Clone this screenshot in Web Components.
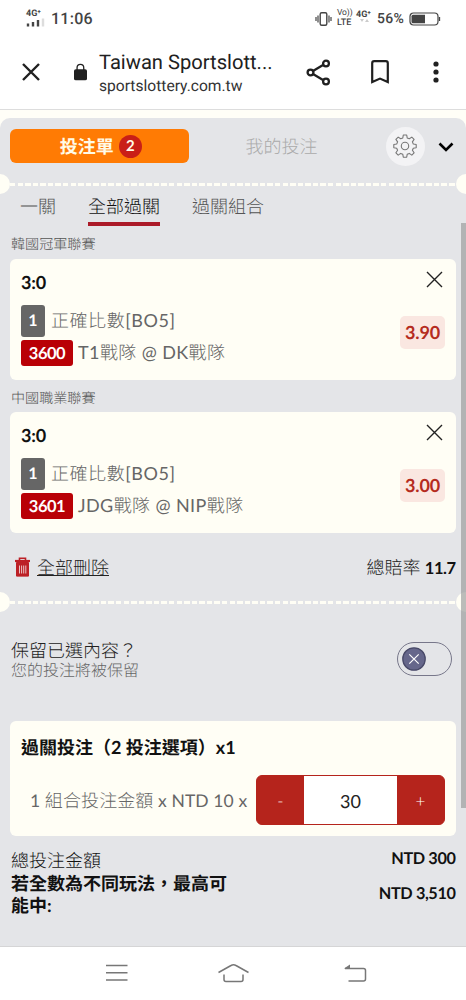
<!DOCTYPE html>
<html lang="zh-Hant">
<head>
<meta charset="utf-8">
<title>Taiwan Sportslottery</title>
<style>
html,body{margin:0;height:1000px;overflow:hidden;background:#fff}
body{font-family:Lato,"Noto Sans CJK TC",sans-serif;text-rendering:geometricPrecision}
</style>
</head>
<body>
<bet-app></bet-app>
<script>
const define = (name, html) => customElements.define(name, class extends HTMLElement {
  constructor() {
    super();
    const t = document.createElement('template');
    t.innerHTML = html;
    this.attachShadow({mode: 'open'}).append(t.content.cloneNode(true));
  }
});

define('status-bar', `
<style>
:host{display:flex;height:38px;box-sizing:border-box;padding:0 25px 0 26px;align-items:center;justify-content:space-between;font-family:Roboto,sans-serif;color:#444;background:#fff}
.g{display:flex;align-items:center}
.sig{display:flex;flex-direction:column;width:19px;margin-right:6px;height:17px;margin-top:-2px}
.sig b{font-size:9px;line-height:8px;font-weight:700}
.time{font:500 16px/20px Roboto;letter-spacing:.25px}
svg{display:block}
.lte{font:400 8.5px/9px Roboto;width:16px;margin:-1px 3px 0 5px}
.lte span{display:block;white-space:nowrap;height:9px;letter-spacing:-.1px}
.lte span+span{font-size:9px;font-weight:500;line-height:10px;height:10px;letter-spacing:0}
.net{font:700 9px/8px Roboto;width:16px;height:17px;margin-right:5px;white-space:nowrap}
.pct{font:500 14px/18px Roboto;letter-spacing:.3px;width:27px;margin-right:5px;white-space:nowrap}
</style>
<div class="g"><div class="sig"><b>4G⁺</b><svg width="19" height="9"><path d="M2 8.5V5.500M7 8.5V4M12 8.5V2" stroke="#444" stroke-width="2.4"/><path d="M17 8.5V.5" stroke="#ddd" stroke-width="2.4"/></svg></div><span class="time">11:06</span></div>
<div class="g">
<svg width="17" height="16" viewBox="0 0 17 16" fill="none" stroke="#444"><rect x="5.2" y="1.7" width="6.6" height="12.6" rx="1.5" stroke-width="1.4"/><path d="M3 4.5v7M1 6v4M14 4.5v7M16 6v4" stroke-width="1.2"/></svg>
<div class="lte"><span>Vo))</span><span>LTE</span></div>
<div class="net">4G⁺<svg width="12" height="5" style="margin-left:4px"><path d="M0 0h4l-2 3zM5 3h4L7 0z" fill="#ccc"/></svg></div>
<span class="pct">56%</span>
<svg width="32" height="14" viewBox="0 0 32 14"><rect x="1" y="1" width="28" height="12" rx="3.5" fill="none" stroke="#444" stroke-width="1.2"/><path d="M4 2.8h12v8.4H4a1.5 1.5 0 0 1-1.5-1.5V4.300A1.500 1.500 0 0 1 4 2.800z" fill="#444"/><path d="M30.500 5v4" stroke="#444" stroke-width="1.300"/></svg>
</div>`);

define('browser-bar', `
<style>
:host{display:flex;height:72px;box-sizing:border-box;align-items:center;padding:0 27px 3px 22px;border-bottom:1px solid #ddd;font-family:Roboto,sans-serif;color:#202020;background:#fff}
svg{display:block;flex:none}
.x{margin-right:51px}
.t{width:176px;margin-left:12px;white-space:nowrap}
.t div:first-child{font-size:20.150px;line-height:26px;margin-top:1px}
.t div+div{font-size:15.600px;line-height:20px;color:#333;margin-top:1px}
.share{margin-left:31px}.mark{margin-left:40px}.dots{margin-left:44px}
</style>
<svg class="x" width="18" height="18" viewBox="0 0 18 18"><path d="M1 1l16 16M17 1L1 17" stroke="#202020" stroke-width="2.400"/></svg>
<svg width="13" height="18" viewBox="0 0 14 18" style="margin-left:-17px"><rect y="6" width="14" height="12" rx="2" fill="#202020"/><path d="M3.300 7V4.300a3.600 3.600 0 0 1 7.200 0V7" fill="none" stroke="#202020" stroke-width="1.400"/></svg>
<div class="t"><div>Taiwan Sportslott...</div><div>sportslottery.com.tw</div></div>
<svg class="share" width="25" height="27" viewBox="0 0 25 27" fill="none" stroke="#202020" stroke-width="2.300"><path d="M7 12L17 6M7 15l10 6"/><circle cx="4.500" cy="13.500" r="2.900"/><circle cx="20" cy="4.500" r="2.900"/><circle cx="20" cy="22.500" r="2.900"/></svg>
<svg class="mark" width="18" height="24" viewBox="0 0 18 24"><path d="M1.200 22V3.200q0-2 2-2h11.600q2 0 2 2V22L9 18.600z" fill="none" stroke="#202020" stroke-width="2.200"/></svg>
<svg class="dots" width="6" height="22" viewBox="0 0 6 22" fill="#202020"><circle cx="3" cy="3" r="2.600"/><circle cx="3" cy="11" r="2.600"/><circle cx="3" cy="19" r="2.600"/></svg>`);

define('slip-header', `
<style>
:host{display:flex;height:56px;align-items:center;padding:0 11px 0 10px;font-size:18px;font-weight:300}
.on{box-sizing:border-box;width:178.500px;height:34px;border-radius:6px;background:#ff7b04;color:#fffbe8;font-weight:700;display:flex;align-items:center;justify-content:center;gap:5px;padding-left:3px}
i{font-style:normal;width:23px;height:23px;border-radius:50%;background:#c91f17;font-size:15px;line-height:23px;text-align:center}
.off{width:186px;text-align:center;color:#aaa}
.gear{width:39px;height:39px;border-radius:50%;background:#f3f3f5;display:flex;align-items:center;justify-content:center;margin-left:11px}
svg{display:block}
.dn{margin-left:13px;margin-top:2px}
</style>
<div class="on">投注單<i>2</i></div><div class="off">我的投注</div>
<div class="gear"><svg width="24" height="24" viewBox="0 0 24 24" fill="none" stroke="#777" stroke-width="1.100" stroke-linejoin="round"><circle cx="12" cy="12" r="3.700"/><path d="M10.300 1h3.400l.5 2.900 2.100.9 2.500-1.700 2.300 2.300-1.700 2.500.9 2.100 2.900.5v3.200l-2.900.5-.9 2.100 1.700 2.500-2.300 2.300-2.500-1.700-2.100.9-.5 2.900h-3.400l-.5-2.900-2.100-.9-2.500 1.700-2.300-2.300 1.700-2.500-.9-2.100L.8 13.700v-3.200l2.900-.5.900-2.100-1.700-2.500 2.300-2.300 2.500 1.700 2.100-.9z"/></svg></div>
<svg class="dn" width="16" height="10" viewBox="0 0 16 10"><path d="M1.500 1.500L8 8l6.500-6.500" fill="none" stroke="#000" stroke-width="2.600"/></svg>`);

define('ticket-divider', `
<style>
:host{display:flex;height:20px;align-items:center;justify-content:space-between;overflow:hidden}
b{width:20px;height:20px;border-radius:50%;background:#fffef5;flex:none}
.s{margin-left:-10px}.e{margin-right:-10px}
span{flex:1;height:3px;background:repeating-linear-gradient(90deg,#fffef5 0 5.500px,transparent 5.500px 7.570px)}
</style><b class="s"></b><span></span><b class="e"></b>`);

define('tab-row', `
<style>
:host{display:flex;gap:32px;padding-left:20px;height:33px;font-size:18px;font-weight:300;color:#555}
div{height:28px;line-height:25px;border-bottom:4px solid transparent}
.on{color:#111;border-color:#ab1a28}
</style><div>一關</div><div class="on">全部過關</div><div>過關組合</div>`);

define('league-name', `
<style>:host{display:block;padding-left:11px;font-size:14.100px;font-weight:300;line-height:20px;color:#555}</style><slot></slot>`);

define('bet-card', `
<style>
:host{display:grid;grid-template-columns:1fr 45px;box-sizing:border-box;height:120.500px;margin:0 10.500px 0 10px;padding:11px 10.500px 0 11px;border-radius:6px;background:#fffef5;font-weight:400;color:#666}
.pick{font-weight:700;font-size:18px;line-height:25px;height:34.500px;color:#111;letter-spacing:-.2px}
.l{display:flex;align-items:center;font-size:18px;white-space:nowrap;font-weight:300}
.l ::slotted(span){margin-bottom:2px}
.one{height:32px;margin-bottom:3px}.two{height:26px}
em{font-style:normal;font-weight:700;color:#fff;box-sizing:border-box;text-align:center;border-radius:3px;margin-right:6px}
.one em{width:24px;height:32px;line-height:32px;background:#666;font-size:16px}
.two em{width:52px;height:26px;line-height:26px;background:#b90006;font-size:16.500px;letter-spacing:-.5px;margin-right:5px}
.one slot{letter-spacing:.55px}
.two>slot{letter-spacing:.4px}
.r{display:flex;flex-direction:column;align-items:flex-end}
svg{display:block;margin:1px 2.500px 0 0}
.odds{width:45px;height:33px;border-radius:5px;background:#fae7e1;color:#b52b20;font-weight:700;font-size:18px;letter-spacing:-.2px;line-height:33px;text-align:center;margin-top:27.500px}
</style>
<div><div class="pick"><slot name="pick"></slot></div>
<div class="l one"><em>1</em><slot name="market"></slot></div>
<div class="l two"><em><slot name="code"></slot></em><slot name="teams"></slot></div></div>
<div class="r"><svg width="17" height="17" viewBox="0 0 17 17"><path d="M1 1l15 15M16 1L1 16" stroke="#222" stroke-width="1.400"/></svg><div class="odds"><slot name="odds"></slot></div></div>`);

define('slip-summary', `
<style>
:host{display:flex;height:59px;box-sizing:border-box;padding:0 10.500px 0 14px;align-items:center;font-size:18px;color:#222;font-weight:300}
svg{display:block;margin-right:6px}
u{text-decoration:none;line-height:21px;border-bottom:1px solid #222;height:18px;margin-top:-1px}
.sum{margin-left:auto}.sum b{font-size:16.500px;font-weight:700;color:#111;letter-spacing:-.5px;margin-left:-.5px}
</style>
<svg width="17" height="20" viewBox="0 0 17 20" fill="none" stroke="#bc2026"><path d="M1 4h15" stroke-width="2.200"/><path d="M5.500 4V1.200h6V4" stroke-width="1.600"/><path d="M2.500 5.500h12v13.600h-12z" fill="#bc2026" stroke-width="1"/><path d="M5.500 8.500v8M7.600 8.500v8M9.700 8.500v8M11.800 8.500v8" stroke="#f0d5d5" stroke-width=".9"/></svg>
<u>全部刪除</u><span class="sum">總賠率 <b>11.7</b></span>`);

define('keep-row', `
<style>
:host{display:flex;justify-content:space-between;align-items:center;height:109px;box-sizing:border-box;padding:0 14px 14px 11px;font-weight:300;color:#222}
.a{font-size:18px;line-height:22px}.b{font-size:16px;line-height:20px;color:#666}
.sw{width:55px;height:34px;box-sizing:border-box;border:1.500px solid #77778a;border-radius:17px;display:flex;align-items:center;padding-left:4px;margin-top:-2px}
svg{display:block}
</style>
<div><div class="a">保留已選內容？</div><div class="b">您的投注將被保留</div></div>
<div class="sw"><svg width="24" height="24" viewBox="0 0 24 24"><circle cx="12" cy="12" r="11.200" fill="#66678b" stroke="#494a69" stroke-width="1.300"/><path d="M7.300 7.300l9.400 9.400M16.700 7.300l-9.400 9.400" stroke="#fff" stroke-width="1.200"/></svg></div>`);

define('number-stepper', `
<style>
:host{display:flex;width:189px;height:50px;box-sizing:border-box;border:1px solid #b5241c;border-radius:6px;overflow:hidden;background:#b5241c;font-size:18px;line-height:50px;text-align:center;color:#fff;font-weight:300}
span{width:47px;font-size:17px}
div{flex:1;background:#fff;color:#222;font-weight:400;font-size:18px}
</style><span>-</span><div><slot></slot></div><span>+</span>`);

define('stake-card', `
<style>
:host{display:block;height:115px;box-sizing:border-box;margin:0 10.500px 0 10px;padding:13px 10.500px 0 11px;border-radius:6px;background:#fffef5;color:#666;font-size:18px;white-space:nowrap}
.h{font-weight:700;color:#111;line-height:26px;height:41px}
.r{display:flex;align-items:center;justify-content:space-between;padding-left:9px;font-weight:300}
i{font-style:normal;font-weight:400;font-size:17.500px}
.r>span{letter-spacing:.1px}
</style>
<div class="h">過關投注（2 投注選項）x1</div>
<div class="r"><span><i>1 </i>組合投注金額<i> x NTD 10 x</i></span><number-stepper>30</number-stepper></div>`);

define('total-rows', `
<style>
:host{display:block;padding:13px 10.500px 0 11px;font-size:18px;color:#111}
div{display:flex;justify-content:space-between;align-items:center;line-height:22px}
.a{font-weight:300}
.m{font-weight:700;margin-top:1px}
span{width:222px}
b{font-size:16.300px;font-weight:700;letter-spacing:-.4px}
.a b{margin-top:-2px}
</style>
<div class="a"><span>總投注金額</span><b>NTD 300</b></div>
<div class="m"><span style="font-family:Lato,'Noto Sans CJK SC',sans-serif">若全數為不同玩法，最高可能中:</span><b>NTD 3,510</b></div>`);

define('nav-bar', `
<style>
:host{display:flex;height:54px;box-sizing:border-box;border-top:1px solid #d5d5d6;background:#fff;align-items:center;padding:0 0 2px 106px}
svg{display:block}
.h{margin-left:90px}.b{margin-left:95px}
</style>
<svg width="22" height="18" viewBox="0 0 22 18"><path d="M0 1.500h21.500M0 8.800h21.500M0 16h21.500" stroke="#777" stroke-width="1.500"/></svg>
<svg class="h" width="31" height="20" viewBox="0 0 31 20" fill="none" stroke="#777" stroke-width="1.500"><path d="M.5 9.500L13 2.500q2.500-1.500 5 0l12.500 7M6 11.500v5q0 2 2 2h15q2 0 2-2v-5"/></svg>
<svg class="b" width="23" height="18" viewBox="0 0 23 18"><path d="M1 4.500h18.500q2 0 2 2v8.500q0 2-2 2H4.500" fill="none" stroke="#777" stroke-width="1.500"/><path d="M0 4.500L6 .5v4.500z" fill="#777"/></svg>`);

define('bet-slip', `
<style>
:host{display:block;position:relative;height:836px;box-sizing:border-box;padding-top:8px;background:#fffef7}
.p{height:828px;background:#e4e5e8;border-radius:10px 10px 0 0}
.bar{position:absolute;right:0;top:113px;width:5px;height:585px;background:rgba(150,152,152,.65)}
i{font-style:normal;font-weight:400}
</style>
<div class="p">
<slip-header></slip-header>
<ticket-divider></ticket-divider>
<tab-row></tab-row>
<league-name style="height:32px;line-height:36px">韓國冠軍聯賽</league-name>
<bet-card><span slot="pick">3:0</span><span slot="market">正確比數<i>[BO5]</i></span><span slot="code">3600</span><span slot="teams"><i>T1</i>戰隊<i> @ DK</i>戰隊</span><span slot="odds">3.90</span></bet-card>
<league-name style="height:32.500px;line-height:37px">中國職業聯賽</league-name>
<bet-card><span slot="pick">3:0</span><span slot="market">正確比數<i>[BO5]</i></span><span slot="code">3601</span><span slot="teams"><i>JDG</i>戰隊<i> @ NIP</i>戰隊</span><span slot="odds">3.00</span></bet-card>
<slip-summary style="height:59.500px;padding-top:9px"></slip-summary>
<ticket-divider></ticket-divider>
<keep-row></keep-row>
<stake-card></stake-card>
<total-rows></total-rows>
</div>
<div class="bar"></div>`);

define('bet-app', `
<style>:host{display:block;width:466px;height:1000px;overflow:hidden}</style>
<status-bar></status-bar><browser-bar></browser-bar><bet-slip></bet-slip><nav-bar></nav-bar>`);
</script>
</body>
</html>
